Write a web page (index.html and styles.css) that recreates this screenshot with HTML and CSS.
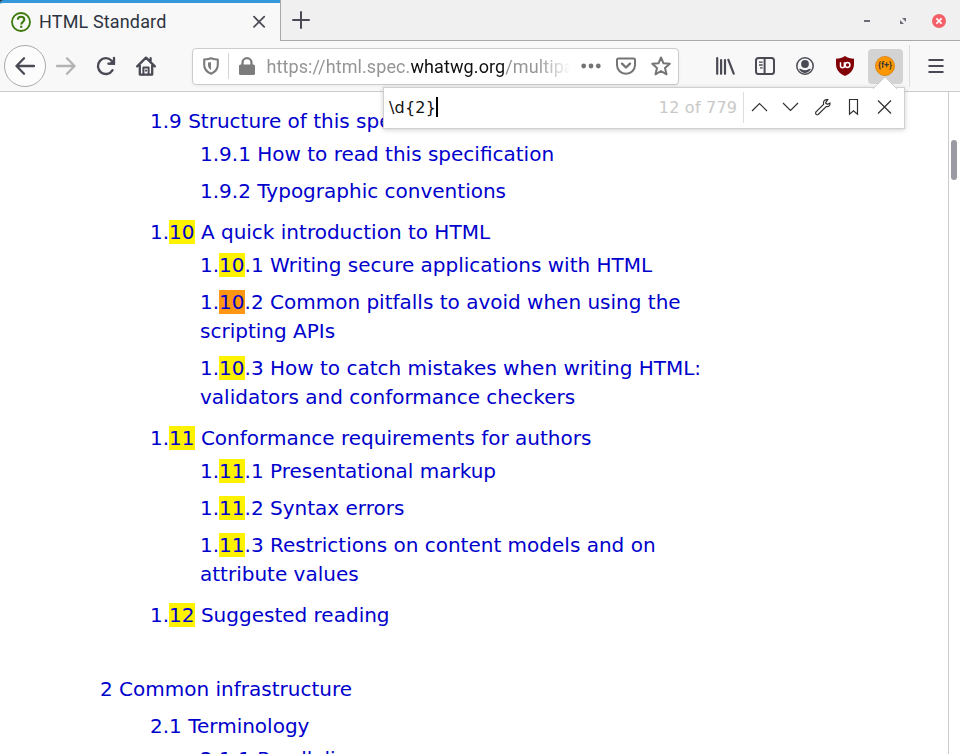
FILE: index.html
```html
<!DOCTYPE html>
<html lang="en">
<head>
<meta charset="utf-8">
<title>HTML Standard</title>
<link rel="stylesheet" href="styles.css">
</head>
<body>
<div class="browser">
  <header class="titlebar">
    <div class="tab">
      <svg class="favicon" width="20" height="20" viewBox="0 0 20 20" fill="none" stroke="#3c790a"><circle cx="10" cy="10" r="9" stroke-width="1.8"/><path d="M6.8 7.6C6.9 5.5 8.2 4.7 10 4.7s3.3 1.1 3.3 2.9c0 2.2-3 2.3-3 4.8" stroke-width="2.1"/><path d="M10.2 13.7v2.1" stroke-width="2.2"/></svg>
      <span class="tab-title">HTML Standard</span>
      <svg class="tab-close" width="14" height="14" viewBox="0 0 14 14" stroke="#4a4a55" stroke-width="1.7" stroke-linecap="round"><path d="M2 1.7l10.200 10.200M12.200 1.700L2 11.900"/></svg>
    </div>
    <div class="tabstrip">
      <svg width="18" height="18" viewBox="0 0 18 18" stroke="#4a4a55" stroke-width="2" stroke-linecap="round"><path d="M9 1v16M1 9h16"/></svg>
      <div class="window-buttons">
        <span class="minimize"></span>
        <svg width="6" height="6" viewBox="0 0 6 6" fill="#6c6c78"><path d="M2 0h4v4zM0 2v4h4z"/></svg>
        <svg width="14" height="14" viewBox="0 0 14 14"><circle cx="7" cy="7" r="7" fill="#f4606a"/><path d="M4.400 4.400l5.200 5.200M9.600 4.400L4.400 9.600" stroke="#fff" stroke-width="1.700"/></svg>
      </div>
    </div>
  </header>

  <nav class="toolbar">
    <div class="back"><svg width="20" height="18" viewBox="0 0 20 18" fill="none" stroke="#4a4a55" stroke-width="2.3" stroke-linecap="round" stroke-linejoin="round"><path d="M19 9H1.5M9 1.3L1.5 9 9 16.7"/></svg></div>
    <svg class="forward" width="20" height="18" viewBox="0 0 20 18" fill="none" stroke="#b3b3b6" stroke-width="2.3" stroke-linecap="round" stroke-linejoin="round"><path d="M1 9h17.5M11 1.3L18.5 9 11 16.7"/></svg>
    <svg class="reload" width="20" height="20" viewBox="0 0 20 20" fill="none" stroke="#4a4a55" stroke-width="2.3" stroke-linecap="round"><path d="M16.600 14.200A7.900 7.900 0 1 1 15.600 4.700"/><path d="M19 1.800v7h-7z" fill="#4a4a55" stroke="none"/><path d="M18 2v5.700h-5.600"/></svg>
    <svg class="home" width="20" height="20" viewBox="0 0 20 20" fill="none" stroke="#4a4a55" stroke-width="2.3" stroke-linecap="round" stroke-linejoin="round"><path d="M1.200 10.400L10 1.600l8.800 8.800M3.800 9v9.600h12.400V9M14.600 2.200v3"/><path d="M7.400 18.600v-7.200h5.200v7.200M10 14.500v.2" stroke-width="2"/></svg>
    <div class="urlbar">
      <svg class="shield" width="16" height="18" viewBox="0 0 16 18" fill="none" stroke="#7c7c7c"><path d="M8 1.200C5.800 2.200 3.500 2.300 1.200 2.500v5.200c0 4 2.500 7.200 6.800 9 4.300-1.800 6.800-5 6.800-9V2.500C12.500 2.300 10.200 2.200 8 1.200z" stroke-width="2.100" stroke-linejoin="round"/><path d="M8 5.200v7.800C6 11.700 5 10.100 5 8V5.500z" fill="#7c7c7c" stroke="none"/></svg>
      <span class="divider"></span>
      <svg class="lock" width="16" height="18" viewBox="0 0 16 18"><rect y="7.500" width="16" height="10.500" rx="1.600" fill="#7c7c7c"/><path d="M3.500 8V5.700a4.500 4.500 0 0 1 9 0V8" fill="none" stroke="#7c7c7c" stroke-width="2.300"/></svg>
      <span class="url">https://html.spec.<b>whatwg.org</b>/multipage/</span>
      <svg class="dots" width="20" height="6" viewBox="0 0 20 6" fill="#747474"><circle cx="2.700" cy="3" r="2.400"/><circle cx="10" cy="3" r="2.400"/><circle cx="17.300" cy="3" r="2.400"/></svg>
      <svg class="pocket" width="20" height="18" viewBox="0 0 20 18" fill="none" stroke="#747474" stroke-width="2" stroke-linecap="round" stroke-linejoin="round"><path d="M2.500 1.500h15q1.500 0 1.500 1.500v5a9 8.800 0 0 1-18 0V3q0-1.500 1.500-1.500z"/><path d="M6 6.700l4 3.800 4-3.800" stroke-width="2.400"/></svg>
      <svg class="star" width="20" height="20" viewBox="0 0 20 20" fill="none" stroke="#747474" stroke-width="2" stroke-linejoin="round"><path d="M10 1.500l2.500 5.800 6.300.5-4.800 4.200 1.500 6.300L10 15l-5.500 3.300L6 12 1.200 7.800l6.300-.5z"/></svg>
    </div>
    <svg class="library" width="20" height="18" viewBox="0 0 20 18" fill="none" stroke="#4a4a55" stroke-width="2.200" stroke-linecap="round"><path d="M2.200 1.200v15.600M6.100 3v13.800M10 3v13.800M13.400 2.800l5.300 13.800"/></svg>
    <svg class="sidebar" width="20" height="18" viewBox="0 0 20 18" fill="none" stroke="#4a4a55" stroke-width="2"><rect x="1" y="1" width="18" height="16" rx="2.500"/><path d="M9.600 1v16"/><path d="M4 5.200h3.700M4 8h3.700M5 10.800h2.700" stroke-width="1.300"/></svg>
    <svg class="account" width="18" height="18" viewBox="0 0 18 18" fill="#4a4a55"><circle cx="9" cy="9" r="8.200" fill="none" stroke="#4a4a55" stroke-width="1.500"/><circle cx="9" cy="7" r="3.900"/><path d="M3 12c2.300-.8 2.500 1.200 6 1.200s3.700-2 6-1.200c-1.200 2.400-3.500 3.900-6 3.900s-4.800-1.500-6-3.900z"/></svg>
    <svg class="ublock" width="18" height="20" viewBox="0 0 18 20"><path d="M9 0c2.800 1.900 5.500 2.500 9 2.800v5C18 13.800 14.500 17.800 9 20 3.500 17.800 0 13.800 0 7.800v-5C3.500 2.500 6.200 1.900 9 0z" fill="#800006"/><path d="M4.500 6.300v3.500a1.900 1.900 0 0 0 3.900 0V6.300M8.400 9.300v2.500" fill="none" stroke="#fff" stroke-width="1.500"/><circle cx="11.500" cy="9" r="2.400" fill="none" stroke="#fff" stroke-width="1.500"/></svg>
    <div class="find-button"><span class="find-logo">{f+}</span></div>
    <span class="menu-divider"></span>
    <svg class="menu" width="16" height="16" viewBox="0 0 16 16" stroke="#4a4a55" stroke-width="2.200" stroke-linecap="round"><path d="M1.300 2h13.400M1.300 8h13.400M1.300 14h13.400"/></svg>
  </nav>

  <div class="findbar">
    <svg class="arrow" width="26" height="13" viewBox="0 0 26 13"><path d="M1 13L13 1l12 12" fill="#fff" stroke="#d0d0d0"/></svg>
    <span class="query">\d{2}</span><span class="caret"></span>
    <span class="count">12 of 779</span>
    <span class="find-divider"></span>
    <svg class="find-icon" width="17" height="18" viewBox="0 0 17 18"><path d="M1 13l7.500-7.500L16 13"/></svg>
    <svg class="find-icon" width="17" height="18" viewBox="0 0 17 18"><path d="M1 5l7.500 7.500L16 5"/></svg>
    <svg class="find-icon" width="17" height="18" viewBox="0 0 17 18"><path d="M13.800 1.700c-2.700-.8-5.300 1.700-4.200 4.700L1.800 14.200q-.5 1.300.3 2.100t2.100.2l8-7.900c2.500.5 4.200-1.300 3.800-3.400l-2.700 1.100-1.800-1.400z"/></svg>
    <svg class="find-icon" width="17" height="18" viewBox="0 0 17 18"><path d="M4.500 1.500h8v14.700l-4-3.400-4 3.400z"/></svg>
    <svg class="find-icon" width="17" height="18" viewBox="0 0 17 18"><path d="M2 2.500l13 13M15 2.500l-13 13"/></svg>
  </div>

  <div class="viewport">
    <main class="page">
      <ol class="toc">
        <li><ol class="sections">
          <li><a>1.9 Structure of this specification</a>
            <ol class="subsections">
              <li><a>1.9.1 How to read this specification</a></li>
              <li><a>1.9.2 Typographic conventions</a></li>
            </ol>
          </li>
          <li><a>1.<mark>10</mark> A quick introduction to HTML</a>
            <ol class="subsections">
              <li><a>1.<mark>10</mark>.1 Writing secure applications with HTML</a></li>
              <li><a>1.<mark class="current">10</mark>.2 Common pitfalls to avoid when using the scripting APIs</a></li>
              <li><a>1.<mark>10</mark>.3 How to catch mistakes when writing HTML: validators and conformance checkers</a></li>
            </ol>
          </li>
          <li><a>1.<mark>11</mark> Conformance requirements for authors</a>
            <ol class="subsections">
              <li><a>1.<mark>11</mark>.1 Presentational markup</a></li>
              <li><a>1.<mark>11</mark>.2 Syntax errors</a></li>
              <li><a>1.<mark>11</mark>.3 Restrictions on content models and on attribute values</a></li>
            </ol>
          </li>
          <li><a>1.<mark>12</mark> Suggested reading</a></li>
        </ol></li>
        <li><a>2 Common infrastructure</a>
          <ol class="sections">
            <li><a>2.1 Terminology</a>
              <ol class="subsections"><li><a>2.1.1 Parallelism</a></li></ol>
            </li>
          </ol>
        </li>
      </ol>
    </main>
    <div class="scrollbar"><div class="thumb"></div></div>
  </div>
</div>
</body>
</html>
```
FILE: styles.css
```css
* { box-sizing: border-box; }
body { margin: 0; background: #fff; }
svg { display: block; flex: none; }
.browser {
  position: relative;
  width: 960px;
  height: 754px;
  display: flex;
  flex-direction: column;
  overflow: hidden;
  font-family: Roboto, sans-serif;
}
.titlebar { height: 41px; flex: none; display: flex; background: linear-gradient(to right, #333 0 5px, #f8f8f8 5px); }
.tab {
  width: 280px;
  display: flex;
  align-items: center;
  padding: 0 14px 0 11px;
  background: #f8f8f8;
  border-top: 3px solid #3498db;
  border-top-left-radius: 4px;
}
.tab-title { margin-left: 8px; flex: 1; font-size: 18px; letter-spacing: .15px; color: #2e3440; line-height: 24px; }
.tabstrip {
  flex: 1;
  display: flex;
  justify-content: space-between;
  align-items: center;
  padding: 0 14px 0 11px;
  background: #f0f0f0;
  border-left: 1px solid #a9a9ab;
  border-bottom: 1px solid #a9a9ab;
}
.window-buttons { display: flex; align-items: center; padding-top: 2px; }
.window-buttons svg:nth-of-type(1) { margin: 0 26px 0 30px; }
.minimize { width: 6px; height: 2px; background: #6c6c78; }

.toolbar {
  height: 51px;
  flex: none;
  display: flex;
  align-items: center;
  background: #f8f8f8;
  border-bottom: 1px solid #ccc;
  padding-left: 4px;
}
.back {
  width: 42px;
  height: 42px;
  border: 1px solid #aaa;
  border-radius: 50%;
  background: #fcfcfc;
  display: flex;
  align-items: center;
  justify-content: center;
}
.forward { margin-left: 10px; }
.reload { margin-left: 20px; }
.home { margin-left: 20px; }
.urlbar {
  width: 487px;
  height: 37px;
  margin-left: 36px;
  display: flex;
  align-items: center;
  background: #fff;
  border: 1px solid #ccc;
  border-radius: 4px;
  box-shadow: 0 1px 3px rgba(0, 0, 0, .06);
}
.shield { margin-left: 10px; }
.divider { width: 1px; height: 26px; background: #d4d4d4; margin-left: 9px; }
.lock { margin-left: 10px; }
.url {
  width: 306px;
  margin-left: 11.500px;
  padding-top: 2px;
  overflow: hidden;
  white-space: nowrap;
  font-size: 18px;
  letter-spacing: .1px;
  line-height: 26px;
  color: #959595;
  -webkit-mask-image: linear-gradient(to right, #000 270px, transparent 304px);
  mask-image: linear-gradient(to right, #000 270px, transparent 304px);
}
.url b { font-weight: 400; color: #111; }
.dots { margin-left: 8.500px; }
.pocket { margin-left: 15px; }
.star { margin-left: 15px; }
.library { margin-left: 36px; }
.sidebar { margin-left: 20px; }
.account { margin-left: 21px; }
.ublock { margin-left: 22px; }
.find-button {
  width: 35px;
  height: 35px;
  margin-left: 14px;
  padding-right: 1px;
  display: flex;
  align-items: center;
  justify-content: center;
  border-radius: 4px;
  background: #d3d3d3;
}
.find-logo {
  width: 20px;
  height: 20px;
  border-radius: 50%;
  border: 1px solid #d9871a;
  background: #ff9800;
  color: #333;
  font-size: 9px;
  font-weight: 600;
  line-height: 17px;
  text-align: center;
}
.menu-divider { width: 1px; height: 42px; margin-left: 6px; background: #ddd; }
.menu { margin-left: 18px; }

.findbar {
  position: absolute;
  left: 383px;
  top: 87px;
  width: 522px;
  height: 42px;
  z-index: 2;
  display: flex;
  align-items: center;
  padding: 0 11px 2px 5px;
  background: #fff;
  border: 1px solid #d0d0d0;
  box-shadow: 0 1px 5px rgba(0, 0, 0, .18);
  font-family: "DejaVu Sans", sans-serif;
  font-size: 16px;
}
.arrow { position: absolute; left: 488px; top: -12px; }
.query { color: #111; letter-spacing: .2px; }
.caret { width: 2px; height: 20px; background: #000; }
.count { margin-left: auto; color: #c8c8c8; letter-spacing: .22px; }
.find-divider { width: 1px; height: 31px; margin: 0 7px 0 6px; background: #ddd; }
.find-icon { fill: none; stroke: #303030; stroke-width: 1.2; }
.find-icon + .find-icon { margin-left: 14.2px; }

.viewport { flex: 1; min-height: 0; display: flex; overflow: hidden; }
.page { flex: 1; padding: 15px 222px 0 100px; }
.scrollbar { width: 12px; border-left: 1px solid #ccc; padding: 48px 0 0 2px; }
.thumb { width: 6px; height: 40px; border-radius: 3px; background: #9b9aa3; }

ol { list-style: none; margin: 0; padding: 0; }
.toc {
  font-family: "DejaVu Sans", sans-serif;
  font-size: 20px;
  line-height: 29px;
  color: #0000cc;
}
.toc > li + li { margin-top: 45px; }
.sections { padding-left: 50px; }
.sections > li + li { margin-top: 12px; }
a + .sections { margin-top: 8px; }
.subsections { padding-left: 50px; margin-top: 4px; }
.subsections > li + li { margin-top: 8px; }
mark { background: #fff200; color: inherit; }
mark.current { background: #ff9613; }
```
